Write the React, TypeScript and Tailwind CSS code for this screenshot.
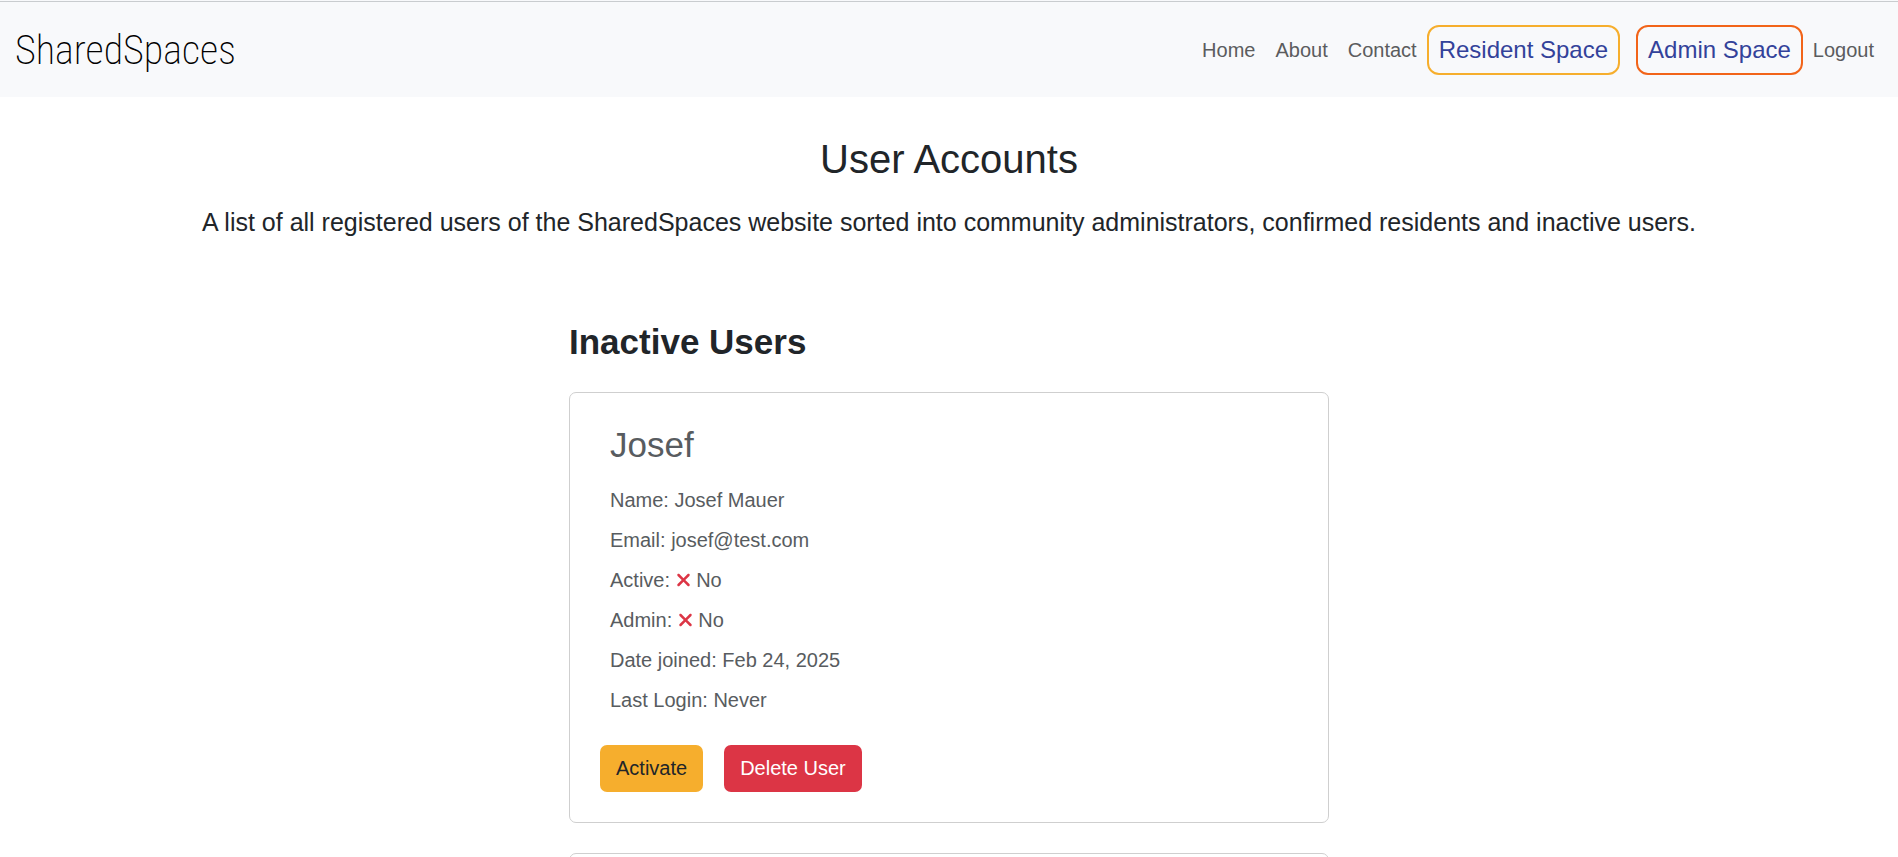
import { FaXmark } from "react-icons/fa6";

const navLinks = ["Home", "About", "Contact"];

type User = {
  username: string;
  name: string;
  email: string;
  joined: string;
  lastLogin: string;
};

const inactiveUsers: User[] = [
  {
    username: "Josef",
    name: "Josef Mauer",
    email: "josef@test.com",
    joined: "Feb 24, 2025",
    lastLogin: "Never",
  },
];

function No() {
  return (
    <>
      <FaXmark className="inline-block h-5 w-[15px] align-[-3px] text-[#dc3545]" aria-hidden="true" /> No
    </>
  );
}

function UserCard({ user }: { user: User }) {
  return (
    <article className="rounded-[7px] border border-[#cfcfcf] bg-white p-[30px]">
      <div className="px-[10px] text-[#585c60]">
        <h3 className="mb-[18px] text-[35px] leading-[44px]">{user.username}</h3>
        <div className="flex flex-col gap-[10px] text-[20px] leading-[30px]">
          <p>Name: {user.name}</p>
          <p>Email: {user.email}</p>
          <p>
            Active: <No />
          </p>
          <p>
            Admin: <No />
          </p>
          <p>Date joined: {user.joined}</p>
          <p>Last Login: {user.lastLogin}</p>
        </div>
      </div>
      <div className="mt-[30px] flex gap-[21px] text-[20px] leading-[31px]">
        <button type="button" className="rounded-[7px] bg-[#f6ae2d] px-4 py-2 text-[#212529]">
          Activate
        </button>
        <button type="button" className="rounded-[7px] bg-[#dc3545] px-4 py-2 text-white">
          Delete User
        </button>
      </div>
    </article>
  );
}

export default function App() {
  return (
    <div className="h-screen overflow-y-auto bg-white font-['Liberation_Sans',Arial,sans-serif] text-[#212529] [scrollbar-width:none]">
      <header className="bg-[#f8f9fb] pt-px">
        <div className="flex flex-wrap items-center justify-between border-t border-[#c9cccf] pt-[23px] pr-[14px] pb-[22px] pl-[15px]">
          <a
            href="#"
            className="pt-[2px] font-['Roboto_Condensed','Roboto',sans-serif] text-[40px] leading-[48px] font-extralight text-black"
          >
            SharedSpaces
          </a>
          <nav className="flex flex-wrap items-center text-[20px] leading-[30px] text-[#5b5c5e]">
            {navLinks.map((label) => (
              <a key={label} href="#" className="px-[10px]">
                {label}
              </a>
            ))}
            <a
              href="#"
              className="mr-4 rounded-xl border-2 border-[#f6ae2d] px-[10px] py-2 text-2xl leading-[30px] text-[#33429a]"
            >
              Resident Space
            </a>
            <a
              href="#"
              className="rounded-xl border-2 border-[#f26419] px-[10px] py-2 text-2xl leading-[30px] text-[#33429a]"
            >
              Admin Space
            </a>
            <a href="#" className="px-[10px]">
              Logout
            </a>
          </nav>
        </div>
      </header>

      <main>
        <div className="px-4 pt-[38px] text-center">
          <h1 className="mb-5 text-[40px] leading-[48px]">User Accounts</h1>
          <p className="text-[25px] leading-[38px]">
            A list of all registered users of the SharedSpaces website sorted into community administrators, confirmed
            residents and inactive users.
          </p>
        </div>

        <section className="mx-auto mt-20 w-full max-w-[760px]">
          <h2 className="mb-[29px] text-[35px] leading-[42px] font-bold">Inactive Users</h2>
          <div className="flex flex-col gap-[30px]">
            {inactiveUsers.map((user) => (
              <UserCard key={user.email} user={user} />
            ))}
            <article className="h-20 rounded-[7px] border border-[#cfcfcf]" />
          </div>
        </section>
      </main>
    </div>
  );
}
